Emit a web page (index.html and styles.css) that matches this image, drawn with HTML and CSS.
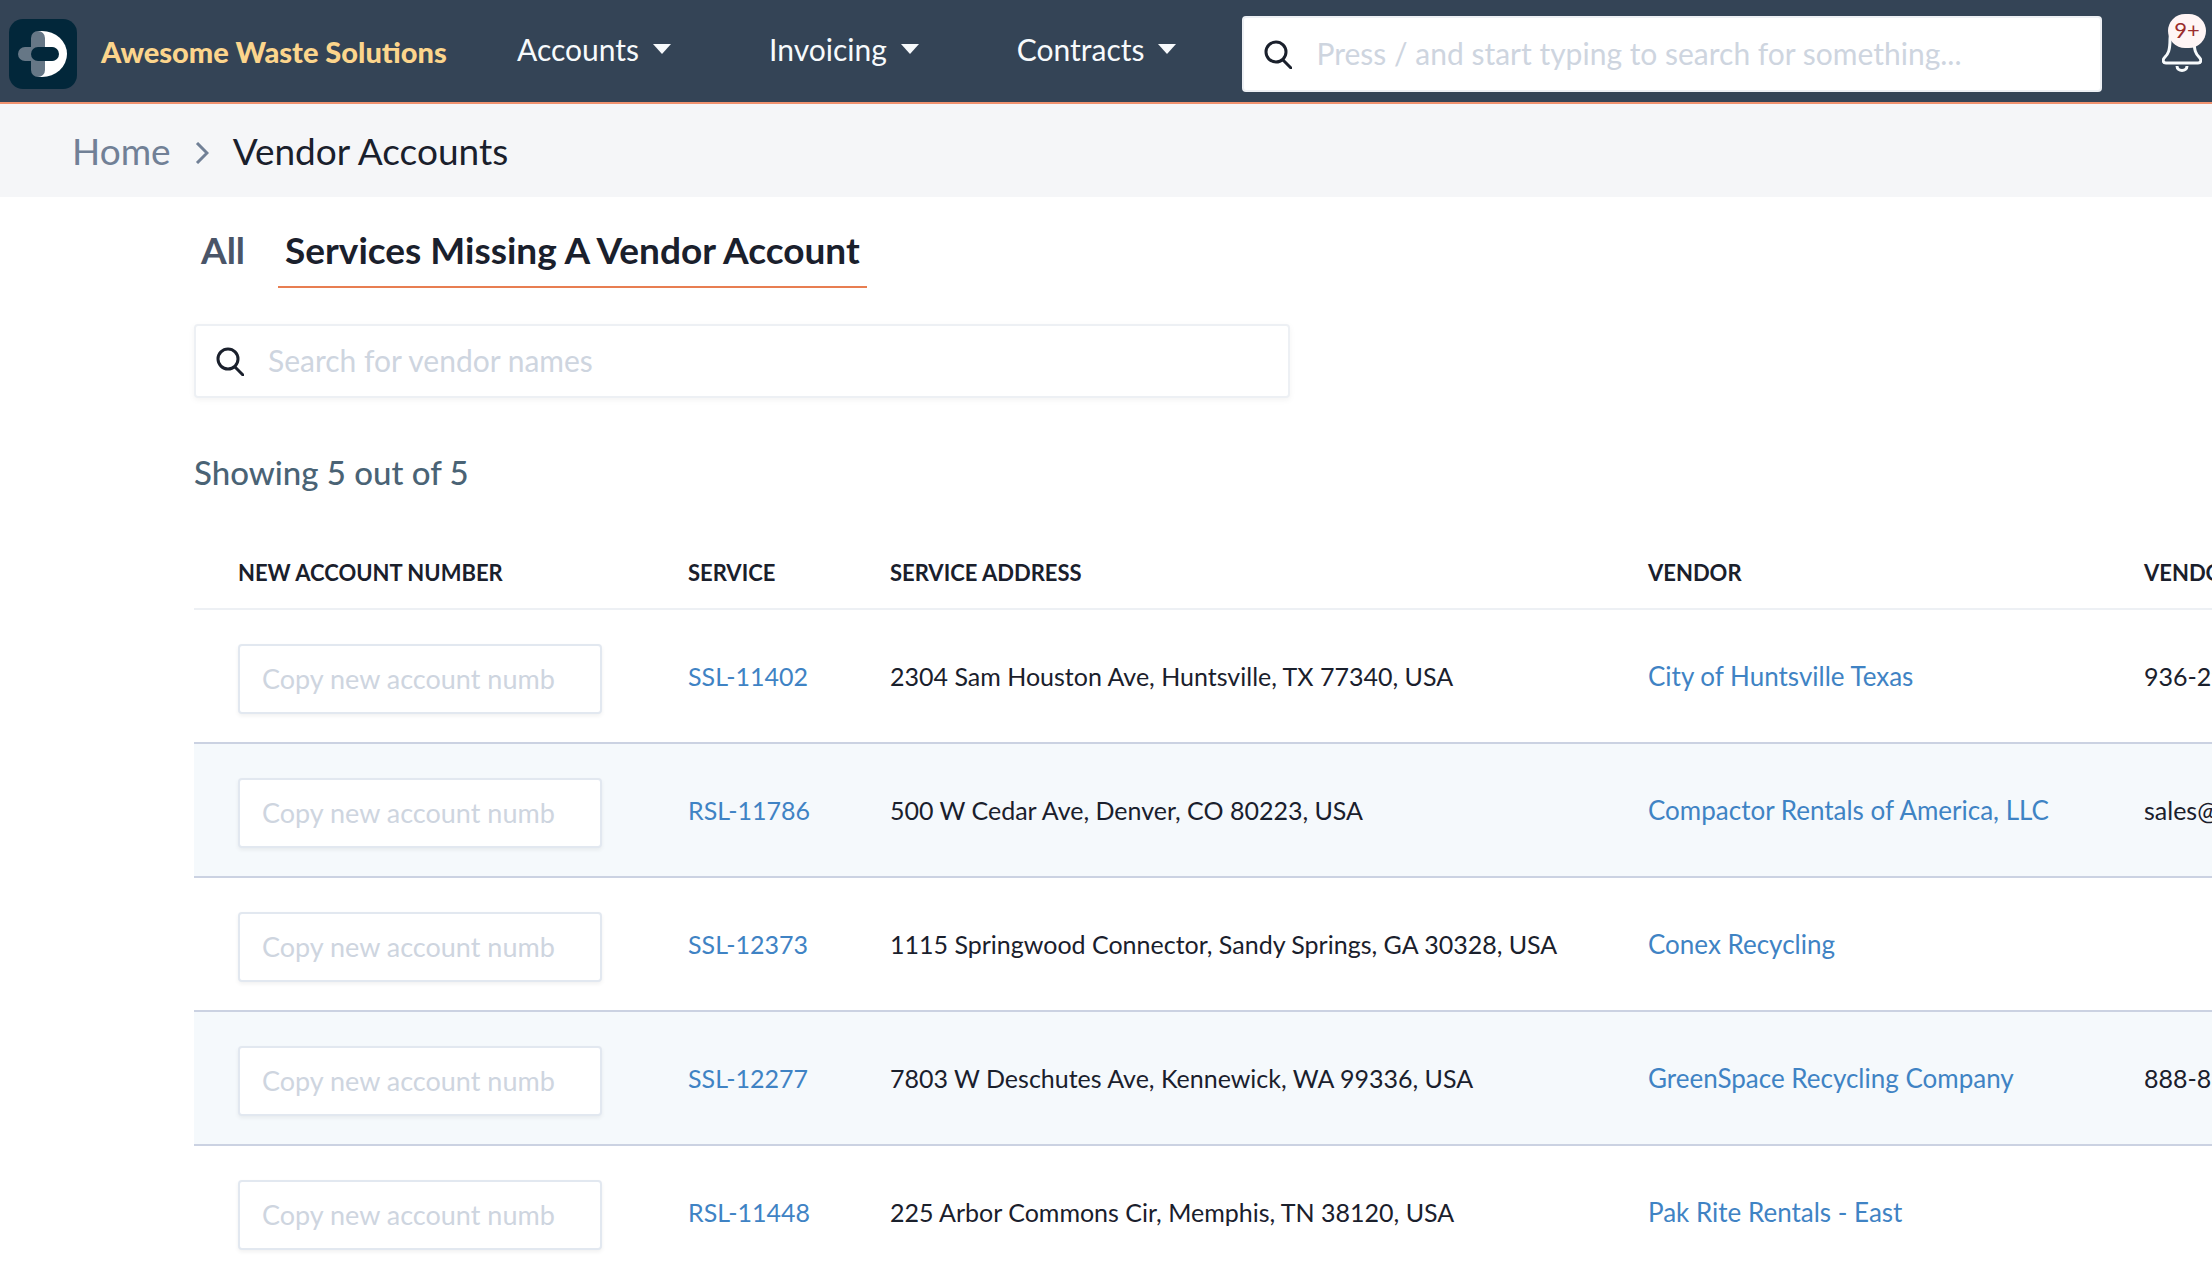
FILE: index.html
```html
<!DOCTYPE html>
<html lang="en">

<head>
  <meta charset="utf-8">
  <title>Vendor Accounts</title>
  <link rel="stylesheet" href="styles.css">
</head>

<body>

  <header class="navbar">
    <a class="logo" href="#" aria-label="Dashboard">
      <svg viewBox="0 0 68 70" width="68" height="70">
        <rect width="68" height="70" rx="14" fill="#02273a" />
        <path d="M29 12h4a25 23 0 0 1 0 46h-4z" fill="#fff" />
        <rect x="9" y="28" width="40" height="14" rx="7" fill="#667786" />
        <rect x="22" y="12" width="14" height="46" rx="7" fill="#667786" />
        <rect x="22" y="28" width="28" height="14" rx="7" fill="#02273a" />
      </svg>
    </a>
    <a class="brand" href="#">Awesome Waste Solutions</a>

    <nav class="menu">
      <button type="button" class="menu-btn">Accounts <span class="caret"></span></button>
      <button type="button" class="menu-btn">Invoicing <span class="caret"></span></button>
      <button type="button" class="menu-btn">Contracts <span class="caret"></span></button>
    </nav>

    <label class="search nav-search">
      <svg class="search-icon" viewBox="0 0 28 29" width="28" height="29">
        <circle cx="12" cy="12" r="10" />
        <path d="M19 20l8 8" />
      </svg>
      <input type="search" aria-label="Search" placeholder="Press / and start typing to search for something...">
    </label>

    <button type="button" class="bell" aria-label="Notifications">
      <svg viewBox="0 0 40 48" width="40" height="48">
        <path d="M20 2c-8 0-12 6-12 13 0 12-2 15-5 18-3 3-2 6 1 6h32c3 0 4-3 1-6-3-3-5-6-5-18 0-7-4-13-12-13z" />
        <path d="M15 42c0 6 10 6 10 0" />
      </svg>
      <span class="badge">9+</span>
    </button>
  </header>

  <nav class="breadcrumb">
    <a href="#">Home</a>
    <svg viewBox="0 0 14 22" width="14" height="22">
      <path d="M2 1l10 10-10 10" />
    </svg>
    <span>Vendor Accounts</span>
  </nav>

  <main class="content">
    <nav class="tabs">
      <a class="tab" href="#">All</a>
      <a class="tab active" href="#">Services Missing A Vendor Account</a>
    </nav>

    <label class="search vendor-search">
      <svg class="search-icon" viewBox="0 0 28 29" width="28" height="29">
        <circle cx="12" cy="12" r="10" />
        <path d="M19 20l8 8" />
      </svg>
      <input type="search" aria-label="Search for vendor names" placeholder="Search for vendor names">
    </label>

    <p class="count">Showing 5 out of 5</p>

    <table class="vendors">
      <colgroup>
        <col class="col-number">
        <col class="col-service">
        <col class="col-address">
        <col class="col-vendor">
        <col>
      </colgroup>
      <thead>
        <tr>
          <th>New Account Number</th>
          <th>Service</th>
          <th>Service Address</th>
          <th>Vendor</th>
          <th>Vendor</th>
        </tr>
      </thead>
      <tbody>
        <tr>
          <td><input type="text" aria-label="New account number" placeholder="Copy new account numb"></td>
          <td><a href="#">SSL-11402</a></td>
          <td>2304 Sam Houston Ave, Huntsville, TX 77340, USA</td>
          <td class="vendor"><a href="#">City of Huntsville Texas</a></td>
          <td>936-29</td>
        </tr>
        <tr>
          <td><input type="text" aria-label="New account number" placeholder="Copy new account numb"></td>
          <td><a href="#">RSL-11786</a></td>
          <td>500 W Cedar Ave, Denver, CO 80223, USA</td>
          <td class="vendor"><a href="#">Compactor Rentals of America, LLC</a></td>
          <td>sales@</td>
        </tr>
        <tr>
          <td><input type="text" aria-label="New account number" placeholder="Copy new account numb"></td>
          <td><a href="#">SSL-12373</a></td>
          <td>1115 Springwood Connector, Sandy Springs, GA 30328, USA</td>
          <td class="vendor"><a href="#">Conex Recycling</a></td>
          <td></td>
        </tr>
        <tr>
          <td><input type="text" aria-label="New account number" placeholder="Copy new account numb"></td>
          <td><a href="#">SSL-12277</a></td>
          <td>7803 W Deschutes Ave, Kennewick, WA 99336, USA</td>
          <td class="vendor"><a href="#">GreenSpace Recycling Company</a></td>
          <td>888-8</td>
        </tr>
        <tr>
          <td><input type="text" aria-label="New account number" placeholder="Copy new account numb"></td>
          <td><a href="#">RSL-11448</a></td>
          <td>225 Arbor Commons Cir, Memphis, TN 38120, USA</td>
          <td class="vendor"><a href="#">Pak Rite Rentals - East</a></td>
          <td></td>
        </tr>
      </tbody>
    </table>
  </main>

</body>

</html>
```
FILE: styles.css
```css
* {
  box-sizing: border-box;
}

body {
  margin: 0;
  font-family: Lato, sans-serif;
  font-size: 25px;
  color: #1a202c;
  background-color: #fff;
  overflow-x: hidden;
}

a {
  color: #3f83c4;
  text-decoration: none;
}

button {
  border: none;
  padding: 0;
  background: none;
  font-family: inherit;
  cursor: pointer;
}

input {
  font-family: inherit;
  color: #1a202c;
}

input::placeholder {
  color: #ced5df;
  opacity: 1;
}

/* top bar */

.navbar {
  display: flex;
  align-items: center;
  height: 104px;
  padding: 0 10px 0 9px;
  background-color: #344456;
  border-bottom: 2px solid #f0926f;
}

.logo {
  display: flex;
  padding-top: 6px;
}

.brand {
  width: 416px;
  padding-left: 24px;
  font-size: 29px;
  font-weight: 900;
  color: #fcd58c;
  white-space: nowrap;
}

.menu {
  display: flex;
  gap: 98px;
  padding: 0 0 4px 24px;
}

.menu-btn {
  display: flex;
  align-items: center;
  gap: 14px;
  font-size: 30px;
  color: #f7fafc;
}

.caret {
  border: 9px solid transparent;
  border-top: 10px solid #f7fafc;
  border-bottom: none;
}

.search {
  display: flex;
  align-items: center;
  gap: 24px;
  padding: 0 20px;
  border: 2px solid #edf0f4;
  border-radius: 4px;
  background-color: #fff;
}

.search-icon {
  flex: none;
  fill: none;
  stroke: #1a202c;
  stroke-width: 3;
  stroke-linecap: round;
}

.search input {
  flex: 1;
  min-width: 0;
  padding: 0 0 3px;
  border: none;
  outline: none;
  background: none;
  font-size: 30px;
}

.nav-search {
  flex: 1;
  height: 76px;
  margin-left: 66px;
  margin-top: 6px;
}

.bell {
  position: relative;
  margin-left: 60px;
  height: 48px;
  margin-top: -6px;
}

.bell svg {
  display: block;
  fill: none;
  stroke: #f7fafc;
  stroke-width: 3;
}

.badge {
  position: absolute;
  top: -10px;
  right: -4px;
  width: 38px;
  height: 34px;
  border-radius: 17px;
  background-color: #fff5f5;
  color: #9b2c2c;
  font-size: 22px;
  line-height: 32px;
}

.breadcrumb {
  display: flex;
  align-items: center;
  gap: 24px;
  height: 93px;
  padding-left: 72px;
  background-color: #f5f6f8;
  font-size: 37px;
}

.breadcrumb a {
  color: #718096;
}

.breadcrumb svg {
  margin-top: 4px;
  fill: none;
  stroke: #718096;
  stroke-width: 3;
}

/* page */

.content {
  padding-left: 194px;
}

.tabs {
  display: flex;
  gap: 26px;
  padding-top: 23px;
}

.tab {
  padding: 8px 7px 15px;
  border-bottom: 2px solid transparent;
  font-size: 37px;
  font-weight: 700;
  line-height: 43px;
  color: #4a5568;
}

.tab.active {
  border-bottom-color: #e87e51;
  color: #1a202c;
}

.vendor-search {
  width: 1096px;
  max-width: 100%;
  height: 74px;
  margin-top: 36px;
  box-shadow: 0 2px 6px rgba(0, 0, 0, 0.05);
}

.count {
  margin: 52px 0 0;
  font-size: 33px;
  font-weight: 500;
  line-height: 44px;
  color: #4a6375;
}

/* vendor table */

.vendors {
  width: 100%;
  margin-top: 42px;
  table-layout: fixed;
  border-collapse: separate;
  border-spacing: 0;
}

.col-number {
  width: 450px;
}

.col-service {
  width: 202px;
}

.col-address {
  width: 758px;
}

.col-vendor {
  width: 496px;
}

.vendors th,
.vendors td {
  padding: 0 0 0 44px;
  text-align: left;
  white-space: nowrap;
}

.vendors th {
  height: 74px;
  border-bottom: 2px solid #edf0f4;
  font-size: 22px;
  font-weight: 700;
  text-transform: uppercase;
}

.vendors td {
  height: 134px;
  border-bottom: 2px solid #cbd2e2;
}

.vendors tbody tr:nth-child(even) td {
  background-color: #f5f9fc;
}

.vendors tbody tr:last-child td {
  border-bottom-color: transparent;
}

.vendors .vendor {
  font-size: 26px;
}

.vendors td input {
  display: block;
  width: 364px;
  height: 70px;
  margin-top: 6px;
  padding: 0 22px 2px;
  border: 2px solid #e2e8f0;
  border-radius: 4px;
  background-color: #fff;
  box-shadow: 0 2px 4px rgba(0, 0, 0, 0.06);
  font-size: 27px;
}
```
